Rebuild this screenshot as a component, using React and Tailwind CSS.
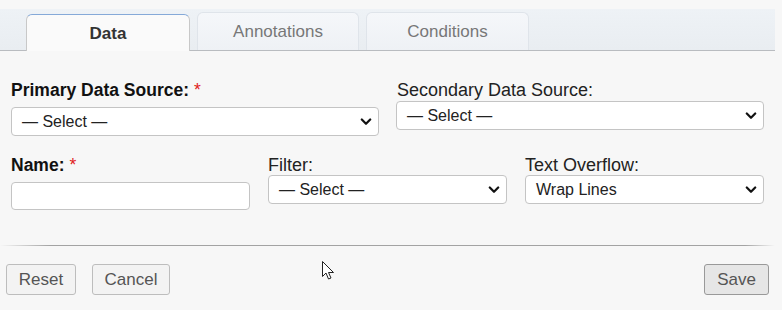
import React from "react";

const Chevron = () => (
  <svg className="pointer-events-none absolute right-[6px] top-1/2 -translate-y-1/2" width="12" height="8" viewBox="0 0 12 8">
    <path d="M1.8 1.5 L6 5.8 L10.2 1.5" fill="none" stroke="#111" strokeWidth="2.2" strokeLinecap="round" strokeLinejoin="round" />
  </svg>
);

const Select = ({ value }) => (
  <div className="relative h-[29px] w-full rounded-[4px] border border-[#c4c4c4] bg-white">
    <div className="flex h-full items-center pl-[10px] text-[16px] text-[#222]">{value}</div>
    <Chevron />
  </div>
);

const Label = ({ children, bold, req }) => (
  <div className={`h-[20px] leading-[20px] whitespace-nowrap ${bold ? "text-[17.5px] font-bold text-[#111]" : "text-[18px] text-[#222]"}`}>
    {children}
    {req && <span className="ml-[5px] font-normal text-[#e02020]">*</span>}
  </div>
);

export default function App() {
  return (
    <div className="relative h-[310px] w-[782px] overflow-hidden bg-[#f7f7f7] font-['Liberation_Sans',Arial,sans-serif]">
      <div className="pt-[9px]">
        <div className="flex h-[42px] w-[775px] items-end gap-[7px] border-b border-[#b9bcc0] bg-gradient-to-b from-[#eef2f6] to-[#e9edf1] pl-[26px]">
          <div className="-mb-px flex h-[37px] w-[164px] items-center justify-center rounded-t-[6px] border border-b-0 border-[#c8c8c8] border-t-[#85a9d8] bg-[#fafafa] pt-[1px] text-[17px] font-bold text-[#333]">
            Data
          </div>
          <div className="flex h-[38px] w-[162px] items-center justify-center rounded-t-[6px] border border-b-0 border-[#dfe4ea] bg-gradient-to-b from-[#f5f7fa] to-[#eef1f5] text-[17px] text-[#777]">
            Annotations
          </div>
          <div className="flex h-[38px] w-[163px] items-center justify-center rounded-t-[6px] border border-b-0 border-[#dfe4ea] bg-gradient-to-b from-[#f5f7fa] to-[#eef1f5] text-[17px] text-[#777]">
            Conditions
          </div>
        </div>
      </div>

      <div className="pl-[11px] pr-[18px] pt-[29px]">
        <div className="grid grid-cols-2 gap-x-[17px]">
          <div>
            <Label bold req>Primary Data Source:</Label>
            <div className="mt-[7px]"><Select value="— Select —" /></div>
          </div>
          <div className="pl-[1px]">
            <Label>Secondary Data Source:</Label>
            <div className="ml-[-1px] mt-[1px]"><Select value="— Select —" /></div>
          </div>
        </div>
        <div className="mt-[19px] grid grid-cols-3 gap-x-[18px]">
          <div>
            <Label bold req>Name:</Label>
            <div className="mt-[7px] h-[28px] w-full rounded-[4px] border border-[#c4c4c4] bg-white" />
          </div>
          <div>
            <Label>Filter:</Label>
            <Select value="— Select —" />
          </div>
          <div>
            <Label>Text Overflow:</Label>
            <Select value="Wrap Lines" />
          </div>
        </div>
      </div>

      <div className="mt-[35px] h-px w-[775px] bg-[linear-gradient(to_right,rgba(160,160,160,0)_0px,#a3a3a3_50px,#a3a3a3_745px,rgba(160,160,160,0)_775px)]" />

      <div className="mt-[18px] flex items-center pl-[6px] pr-[13px]">
        <button className="h-[31px] w-[70px] rounded-[3px] border border-[#bdbdbd] bg-[#f3f3f3] text-[17px] text-[#555]">Reset</button>
        <button className="ml-[16px] h-[31px] w-[78px] rounded-[3px] border border-[#bdbdbd] bg-[#f3f3f3] text-[17px] text-[#555]">Cancel</button>
        <div className="flex-1" />
        <button className="h-[31px] w-[65px] rounded-[3px] border border-[#999] bg-[#e6e6e6] text-[17px] text-[#555]">Save</button>
      </div>

      <svg className="absolute left-[322px] top-[261px]" width="13" height="20" viewBox="0 0 13 20">
        <path d="M0.5 0.5 L0.5 15.5 L4 12 L6.5 18 L9 17 L6.5 11.5 L11.5 11.5 Z" fill="#fff" stroke="#222" strokeWidth="1" strokeLinejoin="round" />
      </svg>
    </div>
  );
}
